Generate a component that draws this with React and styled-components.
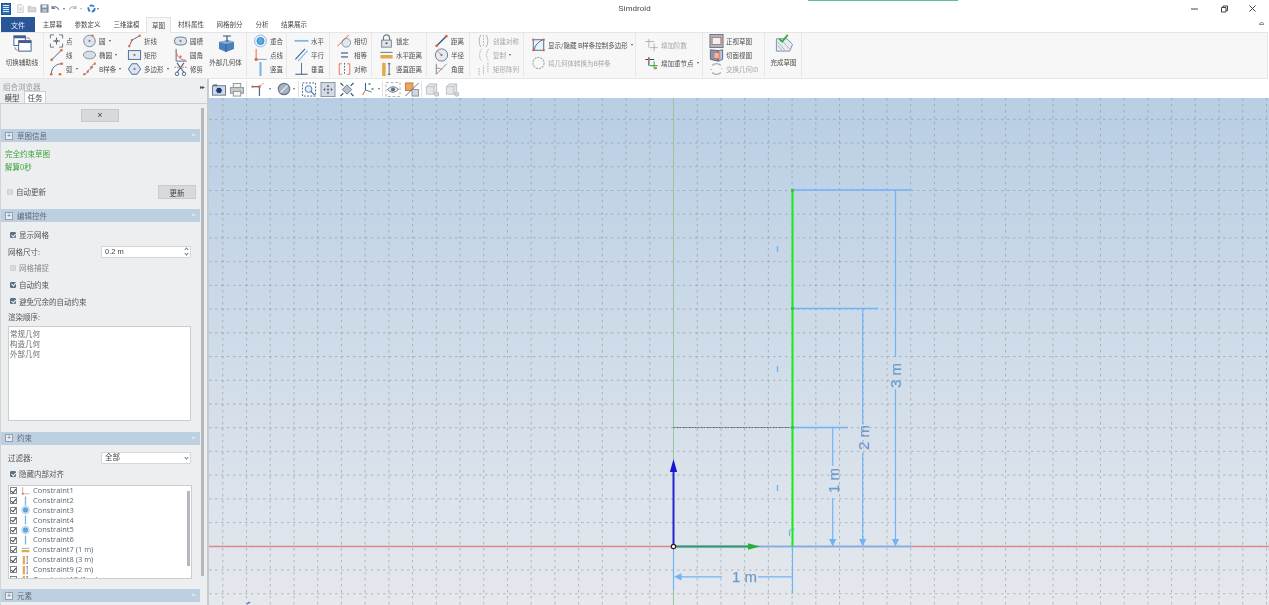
import React from "react";
import styled, { createGlobalStyle } from "styled-components";

const Global = createGlobalStyle`
  html, body { margin: 0; height: 100%; overflow: hidden; background: #fff; }
  #root { height: 100%; }
  * { box-sizing: border-box; }
`;

const FONT = `"Noto Sans CJK SC", "Liberation Sans", sans-serif`;
const RED = "#e2673f", DK = "#3d5f8f", LB = "#7db6e2", GR = "#a9adb1", OR = "#e5a94d";

const Dot = ({ x, y, r = 1.3 }) => <circle cx={x} cy={y} r={r} fill={RED} />;

const ICONS = {
  switchAux: <g><rect x="2" y="1" width="12" height="10" fill="#fff" stroke={DK} /><rect x="2" y="1" width="12" height="2.5" fill={DK} /><rect x="7" y="6" width="13" height="11" fill="#fff" stroke={DK} /><rect x="7" y="6" width="13" height="2.5" fill={DK} /><path d="M15 3 q4 0 4 2" stroke={RED} fill="none" /><path d="M3 13 q0 3 3 3" stroke={RED} fill="none" /></g>,
  point: <g stroke="#56677c" fill="none"><path d="M1 5V1h4M11 1h4v4M15 11v4h-4M5 15H1v-4" /><path d="M8 4v8M4 8h8" stroke={DK} /><Dot x={8} y={8} /></g>,
  line: <g><path d="M2 14L14 2" stroke={DK} strokeWidth="1.1" /><Dot x={2.5} y={13.5} r={1.5} /><Dot x={13.5} y={2.5} r={1.5} /></g>,
  arc: <g><path d="M2 14C2 7 7 2 14 2" stroke={DK} fill="none" /><Dot x={2} y={14} r={1.5} /><Dot x={14} y={2} r={1.5} /><Dot x={12} y={14} r={1.5} /></g>,
  circle: <g><circle cx="8" cy="8" r="6.6" fill="#d7e6f4" stroke="#6f8196" /><Dot x={8} y={8} /><Dot x={11.5} y={2} /></g>,
  ellipse: <ellipse cx="8" cy="8" rx="7" ry="4.4" fill="#d8dde2" stroke="#7c8a99" />,
  bspline: <g><path d="M2 14C7 14 5 8 9 8S10 2 14 2" stroke={DK} strokeDasharray="2 1" fill="none" /><Dot x={2} y={14} /><Dot x={14} y={2} /><Dot x={6} y={11} /><Dot x={10} y={6} /></g>,
  polyline: <g><path d="M2 14L5 7L14 2" stroke={DK} fill="none" /><Dot x={2} y={14} /><Dot x={5} y={7} /><Dot x={14} y={2} /></g>,
  rect: <g><rect x="1" y="3" width="14" height="10" fill="#e3edf6" stroke={DK} /><Dot x={8} y={8} /></g>,
  polygon: <g><path d="M5 2h6l4 6-4 6H5L1 8z" fill="#d7e6f4" stroke={DK} /><Dot x={8} y={8} /></g>,
  slot: <g><rect x="1" y="3.5" width="14" height="9" rx="4.5" fill="#d7e6f4" stroke="#5d7187" /><Dot x={8} y={8} /></g>,
  fillet: <g><path d="M3 1v14h12" stroke={DK} fill="none" /><path d="M3 4C4 10 7 13 14 14" stroke={RED} fill="none" /><Dot x={8} y={10} /></g>,
  trim: <g><path d="M4 1l8 11M12 1L4 12" stroke={DK} strokeWidth="1.2" /><circle cx="4" cy="13.5" r="2" fill="none" stroke={DK} /><circle cx="12" cy="13.5" r="2" fill="none" stroke={DK} /><path d="M1 6h14" stroke={RED} strokeDasharray="2 1" /></g>,
  external: <g><path d="M3 8l9-2 6 2v7l-8 3-7-3z" fill="#4a81bd" /><path d="M3 8l7 2 8-2-6-2z" fill="#83b0d9" /><path d="M10 10v8" stroke="#2f5d92" /><path d="M7 2h8M11 2v6" stroke="#40566e" strokeWidth="1.2" /></g>,
  coincident: <g><circle cx="8" cy="8" r="6.8" fill="#e8f1f9" stroke="#8ab4d8" /><circle cx="8" cy="8" r="4" fill="#5aaae6" stroke="#2e7fc4" /></g>,
  ptline: <g><path d="M3 1v12" stroke={RED} strokeWidth="1.1" /><path d="M3 13h12" stroke="#7aa0c0" strokeWidth="1.1" /><Dot x={3} y={13} r={1.8} /></g>,
  vbar: <rect x="6.8" y="0" width="2.4" height="16" fill={LB} />,
  hbar: <rect x="0" y="6.8" width="16" height="2" fill={LB} />,
  parallel: <g strokeWidth="1.2"><path d="M1 13L12 1" stroke={DK} /><path d="M4 15L15 3" stroke={LB} /></g>,
  perp: <g><path d="M8 1v13" stroke={DK} /><path d="M1 14h14" stroke={DK} strokeWidth="1.2" /></g>,
  tangent: <g><circle cx="10" cy="10" r="5" fill="#dce9f4" stroke="#7c8ea0" /><path d="M0 14L13 1" stroke={RED} strokeWidth="1.1" /></g>,
  equal: <g fill="#48658c"><rect x="4" y="5" width="8" height="1.4" /><rect x="4" y="9.5" width="8" height="1.4" /></g>,
  symmetric: <g fill="none"><path d="M5 2H2v12h3M11 2h3v12h-3" stroke={RED} /><path d="M8 1v14" stroke={DK} strokeDasharray="2 1.5" /></g>,
  lock: <g><path d="M4.5 7V4.5a3.5 3.5 0 017 0V7" fill="none" stroke="#6b7a8a" strokeWidth="1.3" /><rect x="2.5" y="7" width="11" height="8" fill="#dfe5ea" stroke="#6b7a8a" /><circle cx="8" cy="10.5" r="1.2" fill="#44546a" /></g>,
  hdist: <g><path d="M1 5h14" stroke="#4d6a8f" /><rect x="1" y="8" width="14" height="4" fill={OR} /></g>,
  vdist: <g><rect x="3" y="1" width="4" height="15" fill={OR} /><path d="M11 1v14M9.5 2h3M9.5 14h3" stroke="#3f5775" fill="none" /></g>,
  distance: <g><path d="M2 14L14 2" stroke="#33507c" strokeWidth="1.4" /><Dot x={2.5} y={13.5} r={1.6} /><Dot x={13.5} y={2.5} r={1.6} /></g>,
  radius: <g><circle cx="8" cy="8" r="7" fill="#e3ecf4" stroke="#5a6f86" /><path d="M8 8L3 3" stroke={RED} /><Dot x={8} y={8} /></g>,
  angle: <g fill="none"><path d="M2 14V2M2 14L14 2" stroke="#6d7f92" /><path d="M2 7C6 7 8 8 9 9" stroke={RED} /></g>,
  createSym: <g fill="none" stroke={GR}><path d="M5 1Q1 8 5 15M11 1q4 7 0 14" /><path d="M8 1v14" strokeDasharray="2 1.5" /></g>,
  copy: <g fill="none" stroke={GR} strokeDasharray="2 1"><path d="M6 1Q1 8 6 15M14 1q-5 7 0 14" /></g>,
  array: <g fill="none" stroke={GR} strokeDasharray="2 1"><path d="M3 15V7M8 14V4M13 12V1" /></g>,
  showPoly: <g><rect x="2" y="2" width="12" height="12" fill="#eaf2f9" stroke={DK} /><path d="M3 14Q4 6 13 2" stroke={DK} fill="none" /><Dot x={2} y={2} /><Dot x={14} y={2} /><Dot x={2} y={14} /><Dot x={14} y={14} /></g>,
  dashCircle: <circle cx="8" cy="8" r="6.4" fill="none" stroke={GR} strokeWidth="1.3" strokeDasharray="2.5 1" />,
  addDeg: <g stroke={GR} fill="none"><path d="M5 1v10M1 4h10M11 6v9M6 11h9" /></g>,
  addKnot: <g fill="none"><path d="M5 1v10M1 4h10" stroke="#27496f" strokeWidth="1.2" /><path d="M11 6v9M6 11h9" stroke="#3fb54e" strokeWidth="1.2" /><Dot x={13} y={14} /><Dot x={5} y={4} /></g>,
  frontView: <g><rect x="0.5" y="0.5" width="15" height="15" fill="#a9b6c5" stroke="#5f7085" /><rect x="3" y="4" width="10" height="8" fill="#eef1f4" stroke={RED} /></g>,
  section: <g><path d="M1 2l9 1v12l-9-2z" fill="#7f99b8" stroke="#4e647f" /><path d="M10 3l5-1v11l-5 2z" fill="#aec3d9" stroke="#4e647f" /><rect x="5" y="5" width="6" height="7" fill="#e9b7ad" stroke={RED} /></g>,
  swapId: <g fill="none" stroke={GR} strokeWidth="1.5"><path d="M3 4a7 7 0 0110 0M13 12a7 7 0 01-10 0M2 8v1M14 7v1" /></g>,
  finish: <g><path d="M2 5h11l6 6-3 7H2z" fill="#e7edf2" stroke="#7c8ea0" /><path d="M3 8l8 9M3 12l5 5M7 6l9 10" stroke="#a5b4c3" /><path d="M5 5l3 3 6-7" stroke="#3cb043" strokeWidth="2" fill="none" /></g>,
  camera: <g><rect x="1" y="4" width="14" height="10" fill="#cfdbe6" stroke="#5f7286" /><rect x="2" y="2.5" width="4" height="2" fill="#5f7286" /><circle cx="8" cy="9" r="3.6" fill="#173a78" stroke="#e9eef4" /></g>,
  printer: <g fill="none" stroke="#8d9296"><rect x="4" y="1.5" width="8" height="4.5" fill="#f2f2f2" /><rect x="1" y="6" width="14" height="6" fill="#c8cacc" /><rect x="4" y="10" width="8" height="5" fill="#f5f5f5" /></g>,
  workplane: <g fill="none"><path d="M1 5h8" stroke="#56677c" strokeWidth="1.3" /><path d="M9 5v10" stroke="#56677c" strokeWidth="1.3" /><path d="M9 5l5-4" stroke="#d9a58b" /><Dot x={1.5} y={5} r={1.2} /><Dot x={9} y={5} r={1.5} /></g>,
  noEntry: <g fill="none"><circle cx="8" cy="8" r="6.5" fill="#a5b2bf" stroke="#6a7a8a" strokeWidth="1.4" /><path d="M4 12l8-8" stroke="#e8edf1" strokeWidth="1.5" /></g>,
  zoomRect: <g fill="none"><rect x="1" y="1" width="14" height="14" stroke="#44587a" strokeDasharray="2 1.5" /><circle cx="7.5" cy="7.5" r="3.6" fill="#e1edf8" stroke="#4c7aab" /><path d="M10 10l4 4" stroke="#4c7aab" strokeWidth="1.5" /></g>,
  fit: <g><rect x="0.5" y="0.5" width="15" height="15" fill="#d3dae1" stroke="#8494a5" /><g fill="#44556b"><path d="M8 3l1.5 2h-3zM8 13l-1.5-2h3zM3 8l2-1.5v3zM13 8l-2 1.5v-3z" /></g><circle cx="8" cy="8" r="1" fill="#44556b" /></g>,
  expand: <g><path d="M8 3l5 5-5 5-5-5z" fill="#b7c1cc" stroke="#69798a" /><path d="M1 1l3 3M15 1l-3 3M1 15l3-3M15 15l-3-3" stroke="#3e5068" strokeWidth="1.3" /></g>,
  axes: <g fill="none"><path d="M6 9V2" stroke="#3050c0" /><path d="M6 9l6 2" stroke="#37a34a" /><path d="M6 9l-3 5" stroke={RED} /><path d="M9 2l2 2M11 2l-2 2M12 7l2 2M14 7l-2 2" stroke="#555" strokeWidth="0.7" /></g>,
  eye: <g fill="none"><rect x="0.5" y="0.5" width="15" height="15" stroke={GR} strokeDasharray="3 2" /><path d="M2 8q6-6 12 0q-6 6-12 0z" fill="#e9edf1" stroke="#677788" /><circle cx="8" cy="8" r="2.2" fill="#5d7084" /></g>,
  slashBox: <g><rect x="1" y="1" width="8" height="8" fill="#e9a65f" stroke="#c4763d" /><rect x="8" y="8" width="7" height="7" fill="#cfd6dc" stroke="#8696a6" /><path d="M1 15L15 1" stroke="#59697a" /></g>,
  grayBox: <g><path d="M2 5l3-3h8v8l-3 3H2z" fill="#e3e5e7" stroke="#bcc0c4" /><path d="M2 5h8v8M10 5l3-3" fill="none" stroke="#bcc0c4" /><circle cx="13" cy="13" r="2.2" fill="#d3d6d9" stroke="#b4b8bc" /></g>,
  doc: <g><path d="M3 1h7l3 3v11H3z" fill="#f1f2f3" stroke="#c4c7ca" strokeWidth="1.3" /><path d="M8 6v6M5 9h6" stroke="#c4c7ca" /></g>,
  folder: <g><path d="M1 4h5l2 2h7v8H1z" fill="#d5d8db" stroke="#b7bbbf" strokeWidth="1.2" /></g>,
  floppy: <g><rect x="1.5" y="1.5" width="13" height="13" fill="#7d8ea0" stroke="#66788a" /><rect x="4" y="2" width="8" height="4.5" fill="#e5e9ed" /><rect x="4" y="9" width="8" height="5" fill="#b6c2cd" /></g>,
  undo: <g><path d="M3 7q5-6 11 3" fill="none" stroke="#6b7a8a" strokeWidth="2" /><path d="M1 2v7h7z" fill="#6b7a8a" /></g>,
  redo: <g><path d="M13 7Q8 1 2 10" fill="none" stroke="#b3b8bd" strokeWidth="2" /><path d="M15 2v7H8z" fill="#b3b8bd" /></g>,
  refresh: <circle cx="8" cy="8" r="5.5" fill="none" stroke="#2f7cc0" strokeWidth="3.4" strokeDasharray="8 3" />,
};

const IconSvg = styled.svg`
  flex: none;
  display: block;
`;
const Icon = ({ name, w = 15, h = 14, box = "0 0 16 16" }) => (
  <IconSvg width={w} height={h} viewBox={box} preserveAspectRatio="xMidYMid meet" aria-hidden="true">{ICONS[name]}</IconSvg>
);

const Page = styled.div`
  height: 100vh;
  display: flex;
  flex-direction: column;
  font-family: ${FONT};
  color: #555;
  background: #fff;
  overflow: hidden;
  position: relative;
  filter: blur(0.3px);
`;

/* title bar */
const TitleBar = styled.header`
  height: 17px;
  flex: none;
  display: grid;
  grid-template-columns: 1fr auto 1fr;
  align-items: center;
  background: #fff;
`;
const QuickBar = styled.div`
  display: flex;
  align-items: center;
  padding-left: 1px;
`;
const AppLogo = styled.div`
  width: 10px;
  height: 12px;
  background: #2a6fb5;
  border: 1px solid #1d5590;
  margin-right: 5px;
  display: flex;
  flex-direction: column;
  justify-content: center;
  gap: 1px;
  padding: 0 1px;
`;
const LogoBar = styled.i`
  display: block;
  height: 1px;
  background: #d7e6f5;
`;
const QuickSlot = styled.span`
  width: ${p => p.$w}px;
  display: flex;
  align-items: center;
  gap: 1px;
  padding-left: 0;
`;
const Caret = styled.span`
  width: 0;
  height: 0;
  flex: none;
  border-left: 1.5px solid transparent;
  border-right: 1.5px solid transparent;
  border-top: 2px solid ${p => p.$c || "#5b6b7c"};
  margin-left: ${p => p.$ml ?? 2}px;
`;
const AppTitle = styled.div`
  font-size: 8px;
  color: #444;
  font-family: "Liberation Sans", sans-serif;
  letter-spacing: 0.1px;
`;
const WindowControls = styled.div`
  display: flex;
  justify-content: flex-end;
  align-items: center;
  gap: 19px;
  padding-right: 11px;
`;
const GreenStrip = styled.div`
  position: absolute;
  left: 808px;
  top: 0;
  width: 150px;
  height: 1px;
  background: #5cbfa0;
`;

/* tabs */
const TabBar = styled.nav`
  height: 15px;
  flex: none;
  display: flex;
  align-items: stretch;
  padding-left: 1px;
  position: relative;
`;
const FileTab = styled.div`
  width: 34px;
  background: #2a5699;
  color: #e6edf6;
  font-size: 7px;
  display: flex;
  align-items: center;
  justify-content: center;
  margin-right: 2px;
`;
const Tab = styled.div`
  font-size: 6.5px;
  line-height: 1;
  display: flex;
  align-items: center;
  justify-content: center;
  width: ${p => p.$w}px;
  color: #4a4a4a;
  ${p => p.$active && `
    background: #f7f7f7;
    border: 1px solid #e3e3e3;
    border-bottom: 0;
    height: 16px;
  `}
`;
const Collapse = styled.span`
  position: absolute;
  right: 5px;
  top: 5px;
  width: 5px;
  height: 3px;
  border: 1px solid #8a949d;
  border-radius: 3px 3px 0 0;
`;

/* ribbon */
const Ribbon = styled.section`
  height: 47px;
  flex: none;
  display: flex;
  background: #f7f7f7;
  border-top: 1px solid #e5e5e5;
  border-bottom: 1px solid #e6e6e6;
  border-right: 1px solid #e6e6e6;
  margin-right: 1px;
`;
const Group = styled.div`
  width: ${p => p.$w}px;
  flex: none;
  display: flex;
  padding-left: ${p => p.$pl || 0}px;
  padding-top: 1px;
  border-right: 1px solid #e8e8e8;
  height: 44px;
`;
const Col = styled.div`
  width: ${p => p.$w}px;
  flex: none;
  display: flex;
  flex-direction: column;
`;
const Item = styled.div`
  height: 14px;
  display: flex;
  align-items: center;
  gap: ${p => p.$gap ?? 2}px;
  font-size: 6.5px;
  line-height: 1;
  white-space: nowrap;
  color: ${p => (p.$off ? "#a6a6a6" : "#4c4c4c")};
`;
const Big = styled.div`
  width: ${p => p.$w}px;
  flex: none;
  display: flex;
  flex-direction: column;
  align-items: center;
  padding-top: ${p => p.$pt}px;
  font-size: 6.5px;
  line-height: 1;
  white-space: nowrap;
  color: #4c4c4c;
`;
const BigLabel = styled.span`
  margin-top: ${p => p.$mt}px;
`;

/* body */
const Body = styled.main`
  flex: 1;
  min-height: 0;
  display: flex;
`;

/* side panel */
const Side = styled.aside`
  width: 209px;
  flex: none;
  background: #eceef0;
  border-right: 2px solid #c6cbcf;
  display: flex;
  flex-direction: column;
  font-size: 7.5px;
  line-height: 1;
  overflow: hidden;
`;
const SideTitle = styled.div`
  height: 13px;
  flex: none;
  display: flex;
  justify-content: space-between;
  align-items: center;
  padding: 2px 3px 0;
  color: #9a9da0;
`;
const PinIcon = styled.span`
  font-size: 6px;
  color: #4a5866;
  letter-spacing: -1px;
`;
const SideTabs = styled.div`
  height: 11px;
  flex: none;
  display: flex;
  align-items: flex-end;
  padding-left: 4px;
  gap: 4px;
`;
const SideTab = styled.div`
  width: ${p => p.$w}px;
  height: ${p => (p.$active ? 12 : 10)}px;
  display: flex;
  align-items: center;
  justify-content: center;
  color: #444;
  ${p => p.$active && `background:#fff;border:1px solid #cdd1d5;border-bottom:0;`}
`;
const TaskArea = styled.div`
  flex: 1;
  min-height: 0;
  position: relative;
  border-top: 1px solid #c9cdd1;
  border-left: 1px solid #d2d5d8;
  padding-right: 7px;
  display: flex;
  flex-direction: column;
`;
const OuterScroll = styled.div`
  position: absolute;
  left: 200px;
  top: 4px;
  width: 3px;
  height: 468px;
  background: #b3b8bd;
`;
const CloseButton = styled.button`
  align-self: center;
  width: 38px;
  height: 13px;
  margin: 5px 0 0 -1px;
  padding: 0;
  flex: none;
  background: #d8d9da;
  border: 1px solid #c6c8ca;
  font: 9px "Liberation Sans", sans-serif;
  color: #444;
  line-height: 1;
`;
const Header = styled.div`
  height: 13px;
  flex: none;
  margin-top: ${p => p.$mt}px;
  background: #bdd0e2;
  display: flex;
  align-items: center;
  padding: 0 5px 0 4px;
  gap: 4px;
  color: #5f6b76;
  width: 199px;
`;
const PlusBox = styled.span`
  width: 8px;
  height: 8px;
  background: #e9eef3;
  border: 1px solid #8f9fae;
  font-size: 7px;
  line-height: 5px;
  text-align: center;
  color: #667;
  font-family: "Liberation Sans", sans-serif;
`;
const Chevron = styled.span`
  margin-left: auto;
  width: 3px;
  height: 3px;
  border-left: 1px solid #eaf0f5;
  border-top: 1px solid #eaf0f5;
  transform: rotate(45deg);
`;
const Info = styled.div`
  padding: 5px 0 0 4px;
  display: flex;
  flex-direction: column;
  flex: none;
`;
const Status = styled.div`
  height: 13px;
  display: flex;
  align-items: center;
  color: #3aa43a;
`;
const Between = styled.div`
  display: flex;
  align-items: center;
  justify-content: space-between;
  height: 14px;
  margin-top: 12px;
  padding: 0 4px 0 1px;
  margin-bottom: -1px;
`;
const ActionButton = styled.button`
  width: 38px;
  height: 14px;
  padding: 0;
  background: #d8d9da;
  border: 1px solid #c8cacc;
  font: 7.5px ${FONT};
  color: #444;
`;
const CheckWrap = styled.div`
  display: flex;
  align-items: center;
  height: 12px;
  gap: 3px;
  padding-left: ${p => p.$pl ?? 6}px;
  color: ${p => (p.$dim ? "#8a8a8a" : "#555")};
`;
const Check = styled.span`
  width: 6px;
  height: 6px;
  flex: none;
  border-radius: 1px;
  background: ${p => (p.$on ? "#5e7080" : "#d9dadb")};
  border: 1px solid ${p => (p.$on ? "#5e7080" : "#cfd0d2")};
  position: relative;
  &::after {
    content: ${p => (p.$on ? '""' : "none")};
    position: absolute;
    left: 0.6px;
    top: -0.5px;
    width: 2px;
    height: 3.4px;
    border-right: 1px solid #fff;
    border-bottom: 1px solid #fff;
    transform: rotate(40deg);
  }
`;
const Stack = styled.div`
  display: flex;
  flex-direction: column;
  gap: 4.6px;
  padding: 7px 0 0 3px;
  flex: none;
`;
const FieldRow = styled.div`
  display: grid;
  grid-template-columns: 93px 90px;
  align-items: center;
  height: 12px;
  padding-left: 4px;
`;
const Input = styled.div`
  height: 12px;
  background: #fff;
  border: 1px solid #d4d7da;
  border-radius: 1px;
  display: flex;
  align-items: center;
  justify-content: space-between;
  padding: 0 2px 0 3px;
  color: #444;
  font-size: 7.5px;
  font-family: "Liberation Sans", ${FONT};
`;
const Arrows = styled.span`
  display: flex;
  flex-direction: column;
  gap: 1.5px;
`;
const UpTri = styled.i`
  display: block;
  width: 3px;
  height: 3px;
  border-left: 1px solid #70808e;
  border-top: 1px solid #70808e;
  transform: ${p => (p.$down ? "rotate(225deg)" : "rotate(45deg)")};
`;
const OrderLabel = styled.div`
  height: 9px;
  padding-left: 4px;
  display: flex;
  align-items: center;
  color: #555;
`;
const OrderBox = styled.div`
  width: 183px;
  height: 95px;
  margin-left: 4px;
  background: #fff;
  border: 1px solid #c9ccd0;
  padding: 2px 1px;
  color: #6a6a6a;
`;
const OrderItem = styled.div`
  height: 10px;
  line-height: 10px;
`;
const ListBox = styled.div`
  width: 184px;
  height: 94px;
  margin: 5px 0 0 7px;
  background: #fff;
  border: 1px solid #c9ccd0;
  overflow: hidden;
  position: relative;
  flex: none;
`;
const ListRow = styled.div`
  height: 9.9px;
  flex: none;
  display: flex;
  align-items: center;
  padding-left: 1px;
  color: #5b6770;
  font-family: "Open Sans", "Liberation Sans", sans-serif;
  font-size: 7.5px;
`;
const ListRows = styled.div`
  margin-top: -0.5px;
  display: flex;
  flex-direction: column;
`;
const RowCheck = styled.span`
  width: 7px;
  height: 7px;
  flex: none;
  margin-right: 3px;
  border: 1px solid #7c848b;
  position: relative;
  &::after {
    content: "";
    position: absolute;
    left: 1.2px;
    top: -0.4px;
    width: 2.2px;
    height: 4.2px;
    border-right: 1px solid #444;
    border-bottom: 1px solid #444;
    transform: rotate(40deg);
  }
`;
const RowIcon = styled.span`
  width: 10px;
  flex: none;
  margin-right: 3px;
  display: flex;
  justify-content: center;
`;
const InnerScroll = styled.div`
  position: absolute;
  right: 1px;
  top: 5px;
  width: 3px;
  height: 75px;
  background: #b4b8bc;
`;

/* viewport */
const View = styled.div`
  flex: 1;
  min-width: 0;
  display: flex;
  flex-direction: column;
`;
const ViewTools = styled.div`
  height: 19px;
  flex: none;
  display: flex;
  align-items: center;
  background: #fff;
  padding: 1px 0 0 0;
`;
const ToolSlot = styled.span`
  width: ${p => p.$w}px;
  flex: none;
  display: flex;
  align-items: center;
  justify-content: center;
  border-right: ${p => (p.$sep ? "1px solid #e3e3e3" : "0")};
  height: 16px;
`;
const Canvas = styled.svg`
  flex: 1;
  min-height: 0;
  width: 100%;
  display: block;
`;
const Dim = styled.text`
  font-family: "Liberation Sans", sans-serif;
  font-size: 15px;
  fill: #6f9dcb;
  stroke: #6f9dcb;
  stroke-width: 0.25;
`;

const ribbon = [
  { w: 44, big: [{ w: 44, icon: "switchAux", label: "切换辅助线", ih: 19, iw: 21, box: "0 0 22 18", pt: 0, mt: 6 }] },
  { w: 203, pl: 5, cols: [
    [33, [["point", "点"], ["line", "线"], ["arc", "弧", 1]]],
    [45, [["circle", "圆", 1], ["ellipse", "椭圆", 1], ["bspline", "B样条", 1]]],
    [46, [["polyline", "折线"], ["rect", "矩形"], ["polygon", "多边形", 1]]],
    [36, [["slot", "圆槽"], ["fillet", "圆角"], ["trim", "修剪"]]],
  ], big: [{ w: 33, icon: "external", label: "外部几何体", ih: 20, iw: 20, box: "0 0 20 20", pt: 0, mt: 5 }] },
  { w: 40, pl: 6, cols: [[32, [["coincident", "重合"], ["ptline", "点线"], ["vbar", "竖直"]]]] },
  { w: 43, pl: 7, cols: [[34, [["hbar", "水平"], ["parallel", "平行"], ["perp", "垂直"]]]] },
  { w: 42, pl: 7, cols: [[34, [["tangent", "相切"], ["equal", "相等"], ["symmetric", "对称"]]]] },
  { w: 55, pl: 7, cols: [[46, [["lock", "锁定"], ["hdist", "水平距离"], ["vdist", "竖直距离"]]]] },
  { w: 43, pl: 7, cols: [[34, [["distance", "距离"], ["radius", "半径"], ["angle", "角度"]]]] },
  { w: 54, pl: 6, off: true, cols: [[46, [["createSym", "创建对称"], ["copy", "复制", 1], ["array", "矩形阵列"]]]] },
  { w: 112, pl: 7, cols: [[104, [["showPoly", "显示/隐藏 B样条控制多边形", 1], ["dashCircle", "将几何体转换为B样条", 0, 1]]]], top: 4 },
  { w: 67, pl: 8, cols: [[58, [["addDeg", "增加阶数", 0, 1], ["addKnot", "增加重节点", 1]]]], top: 4 },
  { w: 62, pl: 6, cols: [[54, [["frontView", "正视草图"], ["section", "切面视图"], ["swapId", "交换几何ID", 0, 1]]]] },
  { w: 37, big: [{ w: 37, icon: "finish", label: "完成草图", ih: 19, iw: 20, box: "0 0 20 20", pt: 0, mt: 6 }] },
];

const Spaced = styled(Col)`
  padding-top: ${p => p.$top || 0}px;
  gap: ${p => p.$top || 0}px;
`;

const constraints = [
  ["ptline", "Constraint1"], ["vbar", "Constraint2"], ["coincident", "Constraint3"],
  ["vbar", "Constraint4"], ["coincident", "Constraint5"], ["vbar", "Constraint6"],
  ["hdist", "Constraint7 (1 m)"], ["vdist", "Constraint8 (3 m)"], ["vdist", "Constraint9 (2 m)"],
  ["vdist", "Constraint10 (1 m)"],
];

const ox = 673.5, oy = 546.3, step = 23.72;
const xs = Array.from({ length: 46 }, (_, i) => ox + (i - 19) * step);
const ys = Array.from({ length: 24 }, (_, i) => oy + (3 - i) * step);
const B = "#70b4f6";

const Arrow = ({ x, y = 546.5 }) => <path d={`M${x} ${y}l-3.6-7.5h7.2z`} fill={B} />;
const Seg = ({ d, c = B, w = 1.2, ...r }) => <path d={d} stroke={c} strokeWidth={w} fill="none" {...r} />;

function Scene() {
  return (
    <Canvas viewBox="209 98 1060 507" preserveAspectRatio="xMinYMin slice">
      <defs>
        <linearGradient id="sky" x1="0" y1="0" x2="0" y2="1">
          <stop offset="0" stopColor="#b9cee4" />
          <stop offset="0.5" stopColor="#cfdce9" />
          <stop offset="1" stopColor="#e5e8ed" />
        </linearGradient>
      </defs>
      <rect x="209" y="98" width="1060" height="507" fill="url(#sky)" />
      {xs.map(x => <Seg key={x} d={`M${x} 98V605`} c="#85898e" w={1} strokeDasharray="2.5 3.5" opacity="0.5" />)}
      {ys.map(y => <Seg key={y} d={`M209 ${y}H1269`} c="#85898e" w={1} strokeDasharray="2.5 3.5" opacity="0.5" />)}
      <Seg d="M673.5 98V605" c="#9cc59c" w={1} />
      <Seg d="M209 546.5H1269" c="#d98a8a" w={1.3} />
      <Seg d="M673.5 427.5H792" c="#444" w={0.8} strokeDasharray="2 1" />
      {/* constraint marks */}
      <Seg d="M777.5 246v6M777.5 366v6M777.5 485v6" w={1.4} />
      <Seg d="M789.5 536v-5q0-2 5-2" />
      {/* dimensions */}
      <Seg d="M674 546.5H911" w={1.4} />
      <Seg d="M792.5 190H911M792.5 308.5H878M792.5 427.5H848" w={1.4} />
      <Seg d="M895.5 190V357M895.5 389V540" />
      <Seg d="M862.7 308.5V424M862.7 453V540" />
      <Seg d="M832.7 427.5V466M832.7 498V540" />
      <Arrow x={895.5} /><Arrow x={862.7} /><Arrow x={832.7} />
      <Seg d="M792.5 546V593" />
      <Seg d="M673.5 546V590" />
      <Seg d="M680 576.8H722M758 576.8H792.5" />
      <path d="M674 576.8l7.5-3.6v7.2z" fill={B} />
      <Dim x="732" y="582">1 m</Dim>
      <Dim transform="translate(838.5 493) rotate(-90)">1 m</Dim>
      <Dim transform="translate(868.5 450) rotate(-90)">2 m</Dim>
      <Dim transform="translate(901 388) rotate(-90)">3 m</Dim>
      {/* sketch */}
      <Seg d="M792.5 190V546.5" c="#14ee14" w={2} />
      <rect x="791" y="189" width="3" height="3" fill="#35c83d" />
      <rect x="791" y="307" width="3" height="3" fill="#35c83d" />
      <rect x="791" y="426" width="3" height="3" fill="#35c83d" />
      {/* axes */}
      <Seg d="M673.5 546V470" c="#2424d0" w={2} />
      <path d="M673.5 459l3.6 13h-7.2z" fill="#1515d8" />
      <Seg d="M675 546.5H750" c="#2f9a72" w={2} />
      <path d="M760 546.5l-12-3.2v6.4z" fill="#25b03a" />
      <circle cx="673.5" cy="546.5" r="2.2" fill="#fff" stroke="#3a1418" strokeWidth="1.2" />
      <path d="M247 604l3-2" stroke="#4060e0" strokeWidth="1.4" />
    </Canvas>
  );
}

export default function App() {
  return (
    <Page>
      <Global />
      <GreenStrip />
      <TitleBar>
        <QuickBar>
          <AppLogo><LogoBar /><LogoBar /><LogoBar /><LogoBar /></AppLogo>
          <QuickSlot $w={11}><Icon name="doc" w={9} h={9} /></QuickSlot>
          <QuickSlot $w={13}><Icon name="folder" w={10} h={9} /></QuickSlot>
          <QuickSlot $w={11}><Icon name="floppy" w={9} h={9} /></QuickSlot>
          <QuickSlot $w={17}><Icon name="undo" w={9} h={9} /><Caret /></QuickSlot>
          <QuickSlot $w={19}><Icon name="redo" w={9} h={9} /><Caret $c="#b3b8bd" /></QuickSlot>
          <QuickSlot $w={10}><Icon name="refresh" w={9} h={9} /></QuickSlot>
          <Caret $ml={0} />
        </QuickBar>
        <AppTitle>Simdroid</AppTitle>
        <WindowControls>
          <svg width="10" height="10" viewBox="0 0 10 10" aria-hidden="true"><path d="M1 5h7" stroke="#444" /></svg>
          <svg width="10" height="10" viewBox="0 0 10 10" aria-hidden="true"><path d="M2.5 3.5h4.5v4.5H2.5zM4 3.5V2h4.5v4.5H7" fill="none" stroke="#444" /></svg>
          <svg width="10" height="10" viewBox="0 0 10 10" aria-hidden="true"><path d="M1.5 1.5l6 6M7.5 1.5l-6 6" stroke="#444" /></svg>
        </WindowControls>
      </TitleBar>
      <TabBar>
        <FileTab>文件</FileTab>
        <Tab $w={31}>主屏幕</Tab>
        <Tab $w={39}>参数定义</Tab>
        <Tab $w={39}>三维建模</Tab>
        <Tab $w={25} $active>草图</Tab>
        <Tab $w={40}>材料属性</Tab>
        <Tab $w={37}>网格剖分</Tab>
        <Tab $w={28}>分析</Tab>
        <Tab $w={36}>结果展示</Tab>
        <Collapse />
      </TabBar>
      <Ribbon>
        {ribbon.map((g, gi) => (
          <Group key={gi} $w={g.w} $pl={g.pl}>
            {g.cols && g.cols.map(([w, items], ci) => (
              <Spaced key={ci} $w={w} $top={g.top}>
                {items.map(([icon, label, caret, off]) => (
                  <Item key={label} $off={g.off || off}>
                    <Icon name={icon} />
                    {label}
                    {caret ? <Caret $ml={1} $c="#4a5a6c" /> : null}
                  </Item>
                ))}
              </Spaced>
            ))}
            {g.big && g.big.map(b => (
              <Big key={b.label} $w={b.w} $pt={b.pt}>
                <Icon name={b.icon} w={b.iw} h={b.ih} box={b.box} />
                <BigLabel $mt={b.mt}>{b.label}</BigLabel>
              </Big>
            ))}
          </Group>
        ))}
      </Ribbon>
      <Body>
        <Side>
          <SideTitle>组合浏览器<PinIcon>▸▸</PinIcon></SideTitle>
          <SideTabs>
            <SideTab $w={16}>模型</SideTab>
            <SideTab $w={22} $active>任务</SideTab>
          </SideTabs>
          <TaskArea>
            <OuterScroll />
            <CloseButton>×</CloseButton>
            <Header $mt={7}><PlusBox>+</PlusBox>草图信息<Chevron /></Header>
            <Info>
              <Status>完全约束草图</Status>
              <Status>解算0秒</Status>
              <Between>
                <CheckWrap $pl={1}><Check />自动更新</CheckWrap>
                <ActionButton>更新</ActionButton>
              </Between>
            </Info>
            <Header $mt={11}><PlusBox>+</PlusBox>编辑控件<Chevron /></Header>
            <Stack>
              <CheckWrap><Check $on />显示网格</CheckWrap>
              <FieldRow>网格尺寸:<Input>0.2 m<Arrows><UpTri /><UpTri $down /></Arrows></Input></FieldRow>
              <CheckWrap $dim><Check />网格捕捉</CheckWrap>
              <CheckWrap><Check $on />自动约束</CheckWrap>
              <CheckWrap><Check $on />避免冗余的自动约束</CheckWrap>
              <OrderLabel>渲染顺序:</OrderLabel>
              <OrderBox>
                <OrderItem>常规几何</OrderItem>
                <OrderItem>构造几何</OrderItem>
                <OrderItem>外部几何</OrderItem>
              </OrderBox>
            </Stack>
            <Header $mt={11}><PlusBox>+</PlusBox>约束<Chevron /></Header>
            <Stack>
              <FieldRow>过滤器:<Input>全部<Arrows><UpTri $down /></Arrows></Input></FieldRow>
              <CheckWrap><Check $on />隐藏内部对齐</CheckWrap>
            </Stack>
            <ListBox>
              <ListRows>
                {constraints.map(([icon, label]) => (
                  <ListRow key={label}>
                    <RowCheck />
                    <RowIcon><Icon name={icon} w={9} h={10} /></RowIcon>
                    {label}
                  </ListRow>
                ))}
              </ListRows>
              <InnerScroll />
            </ListBox>
            <Header $mt={10}><PlusBox>+</PlusBox>元素<Chevron /></Header>
          </TaskArea>
        </Side>
        <View>
          <ViewTools>
            <ToolSlot $w={19}><Icon name="camera" w={16} h={15} /></ToolSlot>
            <ToolSlot $w={19} $sep><Icon name="printer" w={16} h={15} /></ToolSlot>
            <ToolSlot $w={27}><Icon name="workplane" w={17} h={15} /><Caret /></ToolSlot>
            <ToolSlot $w={25} $sep><Icon name="noEntry" w={14} h={14} /><Caret /></ToolSlot>
            <ToolSlot $w={19}><Icon name="zoomRect" w={16} h={15} /></ToolSlot>
            <ToolSlot $w={19}><Icon name="fit" w={16} h={15} /></ToolSlot>
            <ToolSlot $w={19}><Icon name="expand" w={16} h={15} /></ToolSlot>
            <ToolSlot $w={27} $sep><Icon name="axes" w={17} h={16} /><Caret /></ToolSlot>
            <ToolSlot $w={19}><Icon name="eye" w={16} h={15} /></ToolSlot>
            <ToolSlot $w={20} $sep><Icon name="slashBox" w={16} h={15} /></ToolSlot>
            <ToolSlot $w={20}><Icon name="grayBox" w={16} h={15} /></ToolSlot>
            <ToolSlot $w={20}><Icon name="grayBox" w={16} h={15} /></ToolSlot>
          </ViewTools>
          <Scene />
        </View>
      </Body>
    </Page>
  );
}
